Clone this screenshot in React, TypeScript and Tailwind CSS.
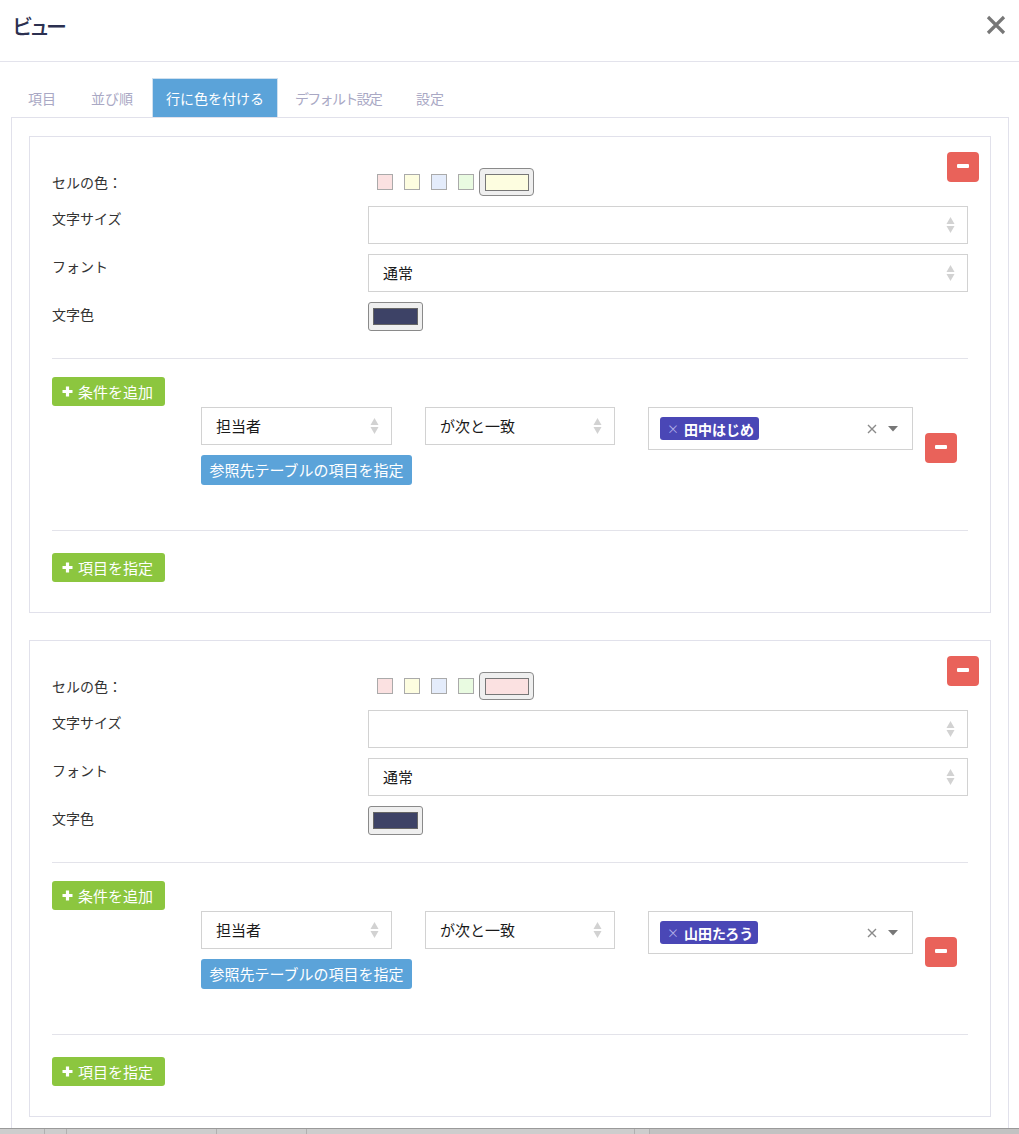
import React from 'react';

const swatches = ['#fbe1e1', '#fdfde0', '#e4ecfb', '#e9fbe1'];

const Arrows = () => (
    <svg width="9" height="18" viewBox="0 0 9 18" className="shrink-0">
        <path d="M4.5 1 L8.5 8 L0.5 8 Z" fill="#d2d2d2" />
        <path d="M4.5 17 L8.5 10 L0.5 10 Z" fill="#d2d2d2" />
    </svg>
);

const Plus = () => (
    <svg width="11" height="11" viewBox="0 0 11 11" className="shrink-0">
        <path d="M5.5 0.5 V10.5 M0.5 5.5 H10.5" stroke="#fff" strokeWidth="3.2" />
    </svg>
);

const MinusButton = ({ className = '' }: { className?: string }) => (
    <button className={`flex h-[30px] w-[32px] items-center justify-center rounded-[4px] bg-[#e9625a] ${className}`}>
        <span className="mb-[3px] block h-[4px] w-[12px] rounded-[1px] bg-white" />
    </button>
);

const Select = ({ value, width }: { value?: string; width: string }) => (
    <div className={`flex h-[38px] ${width} items-center justify-between border border-[#d2d2d2] bg-white pl-[14px] pr-[12px]`}>
        <span className="text-[15px] leading-[20px] text-[#1a1a1a]">{value ?? ''}</span>
        <Arrows />
    </div>
);

const GreenButton = ({ label }: { label: string }) => (
    <button className="flex h-[29px] w-[113px] items-center gap-[5px] rounded-[3px] bg-[#8cc63f] pl-[10px] text-[15px] leading-[20px] text-white">
        <Plus />
        {label}
    </button>
);

const Label = ({ text }: { text: string }) => (
    <div className="w-[316px] shrink-0 pt-[2px] text-[14px] leading-[20px] text-[#333]">{text}</div>
);

const RuleCard = ({ fill, person }: { fill: string; person: string }) => (
    <div className="relative border border-[#e1e1eb] bg-white px-[22px] pb-[30px] pt-[31px]">
        <MinusButton className="absolute right-[11px] top-[15px]" />

        {/* cell colour */}
        <div className="flex h-[28px] items-center">
            <div className="w-[316px] shrink-0 text-[14px] leading-[20px] text-[#333]">セルの色：</div>
            <div className="flex items-center gap-[11px] pl-[9px]">
                {swatches.map(c => (
                    <span key={c} className="block h-[16px] w-[16px] border border-[#aaa]" style={{ backgroundColor: c }} />
                ))}
                <span className="-ml-[6px] flex h-[28px] w-[55px] items-center justify-center rounded-[4px] border border-[#8a8a8a] bg-[#efefef]">
                    <span className="block h-[17px] w-[44px] border border-[#777]" style={{ backgroundColor: fill }} />
                </span>
            </div>
        </div>

        <div className="mt-[10px] flex">
            <Label text="文字サイズ" />
            <Select width="w-[600px]" />
        </div>
        <div className="mt-[10px] flex">
            <Label text="フォント" />
            <Select width="w-[600px]" value="通常" />
        </div>
        <div className="mt-[10px] flex">
            <Label text="文字色" />
            <span className="flex h-[29px] w-[55px] items-center justify-center rounded-[3px] border border-[#8a8a8a] bg-[#efefef]">
                <span className="block h-[17px] w-[45px] border border-[#666] bg-[#3d4266]" />
            </span>
        </div>

        <div className="mt-[27px] border-t border-[#e3e3ea]" />

        <div className="mt-[18px]">
            <GreenButton label="条件を追加" />
        </div>

        {/* condition */}
        <div className="mt-[1px] flex items-start pl-[149px]">
            <div className="flex w-[191px] flex-col items-start">
                <Select width="w-[191px]" value="担当者" />
                <button className="mt-[10px] flex h-[30px] w-[211px] items-center justify-center rounded-[3px] bg-[#5ba3d9] text-[15px] leading-[20px] text-white">
                    参照先テーブルの項目を指定
                </button>
            </div>
            <div className="ml-[33px]">
                <Select width="w-[190px]" value="が次と一致" />
            </div>
            <div className="ml-[33px] flex h-[43px] w-[265px] items-center justify-between border border-[#d2d2d2] bg-white pl-[11px] pr-[14px]">
                <span className="flex h-[23px] items-center gap-[5px] rounded-[3px] bg-[#4a47b6] pl-[7px] pr-[5px]">
                    <span className="text-[12px] leading-[12px] text-[#b3b0e8]">×</span>
                    <span className="text-[14px] font-bold leading-[20px] text-white">{person}</span>
                </span>
                <span className="flex items-center gap-[11px]">
                    <svg width="10" height="10" viewBox="0 0 10 10">
                        <path d="M1 1 L9 9 M9 1 L1 9" stroke="#8a8a8a" strokeWidth="1.4" />
                    </svg>
                    <svg width="10" height="6" viewBox="0 0 10 6">
                        <path d="M0 0 H10 L5 5.5 Z" fill="#777" />
                    </svg>
                </span>
            </div>
            <MinusButton className="ml-[12px] mt-[26px]" />
        </div>

        <div className="mt-[45px] border-t border-[#e3e3ea]" />

        <div className="mt-[22px]">
            <GreenButton label="項目を指定" />
        </div>
    </div>
);

const tabBase = 'flex h-[39px] items-center px-[13px] text-[14px] leading-[20px]';
const tabIdle = `${tabBase} text-[#a9a8c4]`;

export default function App() {
    return (
        <div className="flex h-[1134px] w-[1019px] flex-col overflow-hidden bg-white font-['Noto_Sans_CJK_JP','Noto_Sans',sans-serif]">
            <div className="flex min-h-0 flex-1 flex-col overflow-hidden">
                {/* Header */}
                <div className="flex h-[62px] shrink-0 items-center justify-between border-b border-[#e3e3ec] pb-[12px] pl-[12px] pr-[13px]">
                    <h2 className="text-[21px] font-medium leading-[28px] tracking-[-4px] text-[#2b3050]">ビュー</h2>
                    <svg width="20" height="20" viewBox="0 0 20 20">
                        <path d="M2 2 L18 18 M18 2 L2 18" stroke="#777" strokeWidth="3.2" />
                    </svg>
                </div>

                {/* Tabs */}
                <div className="mt-[16px] flex shrink-0 pl-[15px]">
                    <div className={tabIdle}>項目</div>
                    <div className={`${tabIdle} ml-[9px]`}>並び順</div>
                    <div className={`${tabBase} ml-[6px] border border-b-0 border-[#cfe0ef] bg-[#5ba3d9] text-white`}>行に色を付ける</div>
                    <div className={`${tabIdle} ml-[4px] tracking-[-1.7px]`}>デフォルト設定</div>
                    <div className={`${tabIdle} ml-[9px]`}>設定</div>
                </div>

                {/* Panel */}
                <div className="ml-[11px] mr-[10px] flex flex-col gap-[27px] border border-[#e1e1eb] px-[17px] pb-[20px] pt-[18px]">
                    <RuleCard fill="#fdfde0" person="田中はじめ" />
                    <RuleCard fill="#fbe1e1" person="山田たろう" />
                </div>
            </div>

            {/* page behind the dialog */}
            <div className="flex h-[6px] shrink-0 items-stretch border-t border-[#9a9a9a] bg-[#cdcdcd]">
                <div className="w-[45px] border-r border-[#b0b0b0]" />
                <div className="w-[22px] border-r border-[#b0b0b0]" />
                <div className="w-[150px] border-r border-[#b0b0b0]" />
                <div className="w-[90px] border-r border-[#b0b0b0]" />
                <div className="w-[328px] border-r border-[#b0b0b0]" />
                <div className="w-[15px] border-r border-[#b0b0b0]" />
                <div className="flex-1 bg-[#c2c2c2]" />
            </div>
        </div>
    );
}
